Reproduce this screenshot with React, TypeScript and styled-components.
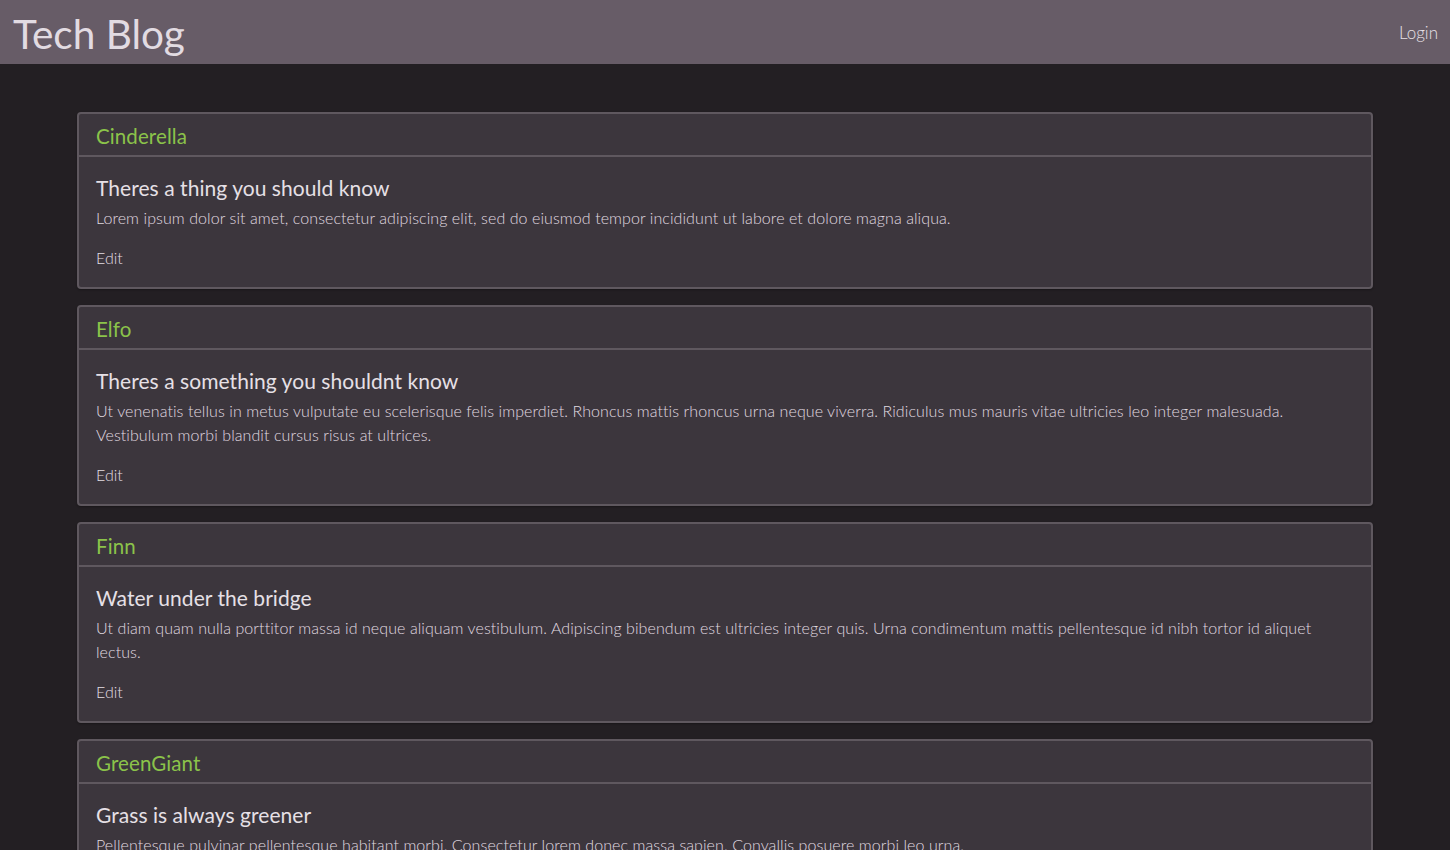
import React from "react";
import styled, { createGlobalStyle } from "styled-components";

const Global = createGlobalStyle`
  html, body { margin: 0; padding: 0; background: #231f23; }
  body { font-family: Lato, "Open Sans", sans-serif; color: #ddd7dd; }
  * { box-sizing: border-box; }
`;

const Page = styled.div`
  min-height: 850px;
  background: #231f23;
`;

const NavBar = styled.header`
  height: 64px;
  background: #675c67;
  display: flex;
  align-items: center;
  justify-content: space-between;
  padding: 0 12px 0 13px;
`;

const Brand = styled.h1`
  margin: 0;
  font-size: 40.5px;
  font-weight: 400;
  color: #e2dbe2;
  line-height: 1;
  padding-top: 4px;
`;

const NavLink = styled.a`
  font-size: 17px;
  font-weight: 300;
  color: #e6e0e6;
  text-decoration: none;
  cursor: pointer;
`;

const Main = styled.main`
  padding: 48px 77px;
  display: flex;
  flex-direction: column;
  gap: 16px;
`;

const Card = styled.article`
  background: #3c363d;
  border: 2px solid #5f585f;
  border-radius: 4px;
  box-shadow: 0 1px 2px rgba(0, 0, 0, 0.3);
`;

const CardHeader = styled.div`
  height: 43px;
  padding: 3px 16px 0 17px;
  display: flex;
  align-items: center;
  border-bottom: 2px solid #5f585f;
  font-size: 20.5px;
  font-weight: 400;
  letter-spacing: 0.1px;
  color: #8bc34a;
`;

const CardBody = styled.div`
  padding: 17px 16px 17px 17px;
`;

const PostTitle = styled.h2`
  margin: 0 0 4px;
  font-size: 21px;
  font-weight: 400;
  letter-spacing: 0.05px;
  line-height: 28px;
  color: #e6e0e6;
`;

const PostText = styled.p`
  margin: 0 0 16px;
  font-size: 16px;
  font-weight: 300;
  letter-spacing: 0.08px;
  line-height: 24px;
  color: #e0dae0;
`;

const EditLink = styled.a`
  display: block;
  font-size: 16px;
  font-weight: 300;
  line-height: 24px;
  color: #e4dee4;
  cursor: pointer;
`;

const posts = [
  {
    author: "Cinderella",
    title: "Theres a thing you should know",
    text: "Lorem ipsum dolor sit amet, consectetur adipiscing elit, sed do eiusmod tempor incididunt ut labore et dolore magna aliqua.",
  },
  {
    author: "Elfo",
    title: "Theres a something you shouldnt know",
    text: "Ut venenatis tellus in metus vulputate eu scelerisque felis imperdiet. Rhoncus mattis rhoncus urna neque viverra. Ridiculus mus mauris vitae ultricies leo integer malesuada. Vestibulum morbi blandit cursus risus at ultrices.",
  },
  {
    author: "Finn",
    title: "Water under the bridge",
    text: "Ut diam quam nulla porttitor massa id neque aliquam vestibulum. Adipiscing bibendum est ultricies integer quis. Urna condimentum mattis pellentesque id nibh tortor id aliquet lectus.",
  },
  {
    author: "GreenGiant",
    title: "Grass is always greener",
    text: "Pellentesque pulvinar pellentesque habitant morbi. Consectetur lorem donec massa sapien. Convallis posuere morbi leo urna.",
  },
];

export default function App() {
  return (
    <Page>
      <Global />
      <NavBar>
        <Brand>Tech Blog</Brand>
        <NavLink>Login</NavLink>
      </NavBar>
      <Main>
        {posts.map((p) => (
          <Card key={p.author}>
            <CardHeader>{p.author}</CardHeader>
            <CardBody>
              <PostTitle>{p.title}</PostTitle>
              <PostText>{p.text}</PostText>
              <EditLink>Edit</EditLink>
            </CardBody>
          </Card>
        ))}
      </Main>
    </Page>
  );
}
